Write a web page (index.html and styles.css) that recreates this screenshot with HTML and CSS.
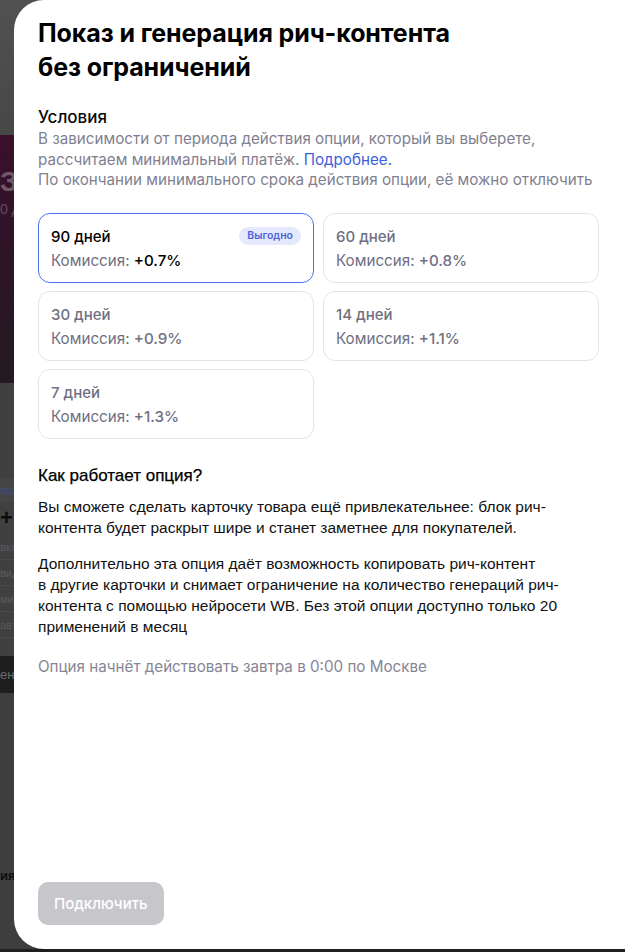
FILE: index.html
```html
<!DOCTYPE html>
<html lang="ru">
<head>
<meta charset="utf-8">
<title>Показ и генерация рич-контента</title>
<link rel="stylesheet" href="styles.css">
</head>
<body>
<div class="page">
  <div class="pg-top"></div>
  <div class="pg-banner">
    <div class="pg-big">Зх</div>
    <div class="pg-small">0 д</div>
  </div>
  <div class="pg-gap"></div>
  <div class="pg-link">год</div>
  <div class="pg-plus">+</div>
  <div class="pg-row">вкл</div>
  <div class="pg-row">вид</div>
  <div class="pg-row">миу</div>
  <div class="pg-row">авт</div>
  <div class="pg-space"></div>
  <div class="pg-btn">ен</div>
  <div class="pg-rest">
    <div class="pg-ia">ия</div>
  </div>
</div>

<aside class="drawer">
  <h1 class="title">Показ и генерация рич-контента<br>без ограничений</h1>

  <h2 class="subtitle">Условия</h2>
  <p class="desc">В зависимости от периода действия опции, который вы выберете, рассчитаем минимальный платёж. <a class="link" href="#">Подробнее.</a><br>По окончании минимального срока действия опции, её можно отключить</p>

  <div class="plans">
    <div class="plan plan-active">
      <div class="plan-head">
        <span class="plan-name">90 дней</span>
        <span class="badge">Выгодно</span>
      </div>
      <div class="plan-fee">Комиссия: <b>+0.7%</b></div>
    </div>
    <div class="plan">
      <div class="plan-head"><span class="plan-name">60 дней</span></div>
      <div class="plan-fee">Комиссия: <b>+0.8%</b></div>
    </div>
    <div class="plan">
      <div class="plan-head"><span class="plan-name">30 дней</span></div>
      <div class="plan-fee">Комиссия: <b>+0.9%</b></div>
    </div>
    <div class="plan">
      <div class="plan-head"><span class="plan-name">14 дней</span></div>
      <div class="plan-fee">Комиссия: <b>+1.1%</b></div>
    </div>
    <div class="plan">
      <div class="plan-head"><span class="plan-name">7 дней</span></div>
      <div class="plan-fee">Комиссия: <b>+1.3%</b></div>
    </div>
  </div>

  <h2 class="how-title">Как работает опция?</h2>
  <p class="how-text">Вы сможете сделать карточку товара ещё привлекательнее: блок рич-контента будет раскрыт шире и станет заметнее для покупателей.</p>
  <p class="how-text how-text-2">Дополнительно эта опция даёт возможность копировать рич-контент<br>в другие карточки и снимает ограничение на количество генераций рич-контента с помощью нейросети WB. Без этой опции доступно только 20 применений в месяц</p>

  <p class="note">Опция начнёт действовать завтра в 0:00 по Москве</p>

  <div class="footer">
    <button class="btn" type="button" disabled>Подключить</button>
  </div>
</aside>
</body>
</html>
```

FILE: styles.css
```css
* { box-sizing: border-box; }

html, body {
  margin: 0;
  padding: 0;
}

body {
  width: 625px;
  height: 952px;
  overflow: hidden;
  background: #1f1f1f;
  position: relative;
  font-family: Inter, "Noto Sans", sans-serif;
}

/* dimmed page behind the drawer */
.page {
  width: 625px;
  height: 949px;
  display: flex;
  flex-direction: column;
  background: #404040;
  overflow: hidden;
  font-family: "Liberation Sans", Arial, sans-serif;
  white-space: nowrap;
}
.pg-top {
  height: 135px;
  background: linear-gradient(180deg, #515151 0%, #474747 100%);
}
.pg-banner {
  height: 248px;
  background: linear-gradient(180deg, #3b0f2c 0%, #2f1428 45%, #231a21 100%);
  padding-top: 30px;
}
.pg-big {
  font-weight: 700;
  font-size: 28px;
  line-height: 34px;
  color: #6d5a66;
}
.pg-small {
  font-size: 14px;
  line-height: 20px;
  color: #5e4e58;
}
.pg-gap {
  height: 95px;
  background: #404040;
}
.pg-link {
  height: 24px;
  font-size: 11px;
  line-height: 24px;
  color: #3e4f80;
  background: #454548;
}
.pg-plus {
  height: 32px;
  font-size: 22px;
  font-weight: 700;
  line-height: 32px;
  color: #0c0c0c;
}
.pg-row {
  height: 26px;
  font-size: 11px;
  line-height: 26px;
  color: #5a5a5a;
  border-bottom: 1px solid #4a4a4a;
}
.pg-space { height: 18px; }
.pg-btn {
  height: 37px;
  background: #1e1e1e;
  color: #6a6a6a;
  font-size: 13px;
  line-height: 37px;
}
.pg-rest {
  flex: 1;
  background: #3e3e3e;
  padding-top: 174px;
}
.pg-ia {
  font-weight: 700;
  font-size: 13px;
  line-height: 18px;
  color: #0e0e0e;
}

/* drawer */
.drawer {
  position: absolute;
  top: 0;
  right: 0;
  width: 611px;
  height: 949px;
  background: #ffffff;
  border-radius: 30px 0 0 30px;
  padding: 16px 25px 24px 24px;
  display: flex;
  flex-direction: column;
  color: #000;
}

.title {
  margin: 0;
  font-size: 25px;
  line-height: 34px;
  font-weight: 700;
  letter-spacing: -0.1px;
  color: #000;
}

.subtitle {
  margin: 21px 0 0;
  font-size: 17px;
  line-height: 24px;
  font-weight: 500;
  color: #0a0a0a;
}

.desc {
  margin: 0;
  font-size: 15.2px;
  line-height: 20.5px;
  color: #7f7f91;
}
.link {
  color: #3c5fe0;
  text-decoration: none;
}

.plans {
  margin-top: 22px;
  display: grid;
  grid-template-columns: 276px 276px;
  column-gap: 9px;
  row-gap: 8px;
}
.plan {
  height: 70px;
  border: 1px solid #e3e3ea;
  border-radius: 12px;
  padding: 11px 12px 0 12px;
  color: #6f6f82;
}
.plan-active {
  border-color: #4f6df0;
  color: #000;
}
.plan-head {
  display: flex;
  justify-content: space-between;
  align-items: center;
  height: 24px;
}
.plan-name {
  font-size: 15px;
  font-weight: 500;
  line-height: 24px;
}
.plan-fee {
  font-size: 15.2px;
  line-height: 24px;
  color: #6f6f82;
}
.plan-fee b {
  font-weight: 500;
}
.plan-active .plan-fee b {
  color: #000;
}
.badge {
  height: 18px;
  padding: 0 8px;
  border-radius: 9px;
  background: #e4e9fd;
  color: #4f63d8;
  font-size: 10.5px;
  font-weight: 600;
  line-height: 18px;
  margin-top: -2px;
}

.how-title {
  margin: 25px 0 0;
  font-family: "Liberation Sans", Arial, sans-serif;
  font-size: 17px;
  line-height: 24px;
  font-weight: 400;
  color: #000;
  -webkit-text-stroke: 0.25px #000;
}
.how-text {
  margin: 8px 0 0;
  font-family: "Liberation Sans", Arial, sans-serif;
  font-size: 15.5px;
  line-height: 21px;
  color: #111;
}
.how-text-2 {
  margin-top: 15px;
}

.note {
  margin: 20px 0 0;
  font-size: 15.2px;
  line-height: 20px;
  color: #858596;
}

.footer {
  margin-top: auto;
}
.btn {
  height: 43px;
  padding: 0 16px;
  border: none;
  border-radius: 10px;
  background: #c6c6cb;
  color: #ffffff;
  font-family: Inter, "Noto Sans", sans-serif;
  font-size: 15px;
  font-weight: 500;
}
```
